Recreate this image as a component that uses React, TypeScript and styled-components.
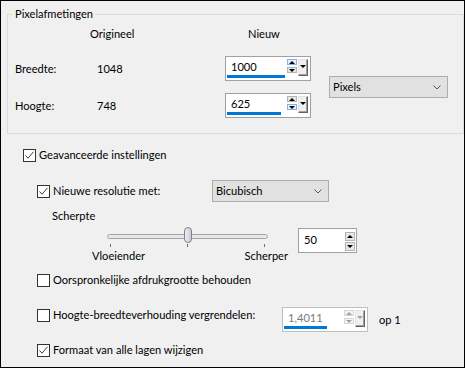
import React from 'react';
import styled, { createGlobalStyle } from 'styled-components';

const GlobalStyle = createGlobalStyle`
  html, body {
    margin: 0;
    padding: 0;
    background: #fff;
  }
`;

const Window = styled.div`
  box-sizing: border-box;
  width: 465px;
  height: 368px;
  border: 1px solid #000;
  background: #f0f0f0;
  padding: 5px 0 0 6px;
  font-family: Lato, 'Noto Sans', 'Liberation Sans', sans-serif;
  font-size: 11.1px;
  line-height: 16px;
  color: #000;
  display: flex;
  flex-direction: column;
`;

const Group = styled.fieldset`
  box-sizing: border-box;
  margin: 0;
  padding: 0;
  min-width: 0;
  width: 457px;
  height: 128px;
  border: 1px solid #dcdcdc;
`;

const Legend = styled.legend`
  margin-left: 5px;
  padding: 0 2px;
  line-height: 16px;
`;

const SizeGrid = styled.div`
  display: grid;
  grid-template-columns: 75px 135px 104px 119px;
  grid-template-rows: 18px 25px 25px;
  row-gap: 12px;
  padding: 4px 0 0 7px;
  align-items: center;
`;

const Cell = styled.div<{ $indent?: number; $head?: boolean }>`
  padding-left: ${(p) => p.$indent ?? 0}px;
  align-self: ${(p) => (p.$head ? 'start' : 'center')};
  white-space: nowrap;
`;

const ComboCell = styled.div`
  grid-column: 4;
  grid-row: 2 / span 2;
  align-self: center;
`;

const Combo = styled.div<{ $w: number }>`
  box-sizing: border-box;
  width: ${(p) => p.$w}px;
  height: 22px;
  border: 1px solid #adadad;
  background: #e1e1e1;
  display: flex;
  align-items: center;
  justify-content: space-between;
  padding: 0 6px 0 3px;
`;

const SpinBox = styled.div<{ $w: number; $pt: number; $pr: number; $disabled?: boolean }>`
  box-sizing: border-box;
  width: ${(p) => p.$w}px;
  height: 25px;
  border: 1px solid ${(p) => (p.$disabled ? '#bfbfbf' : '#a0a0a0')};
  background: #fff;
  display: flex;
  align-items: flex-start;
  padding: ${(p) => p.$pt}px ${(p) => p.$pr}px 0 1px;
  flex: none;
`;

const Field = styled.div<{ $disabled?: boolean }>`
  flex: 1;
  min-width: 0;
  display: flex;
  flex-direction: column;
  color: ${(p) => (p.$disabled ? '#7a7a7a' : '#000')};
`;

const FieldText = styled.span`
  padding-left: 4px;
  line-height: 16px;
`;

const Bar = styled.span<{ $w: number }>`
  display: block;
  width: ${(p) => p.$w}px;
  height: 3px;
  background: #0078d7;
`;

const SpinCol = styled.div<{ $gap: number }>`
  width: 10px;
  display: flex;
  flex-direction: column;
  gap: ${(p) => p.$gap}px;
`;

const SpinBtn = styled.span<{
  $h: number;
  $dir: 'up' | 'down';
  $active?: boolean;
  $disabled?: boolean;
}>`
  box-sizing: border-box;
  height: ${(p) => p.$h}px;
  border: 1px solid
    ${(p) => (p.$active ? '#7eb4ea' : p.$disabled ? '#d6d6d6' : '#b4b4b4')};
  background: ${(p) => (p.$active ? '#e5f1fb' : p.$disabled ? '#f4f4f4' : '#e6e6e6')};
  display: flex;
  align-items: center;
  justify-content: center;

  &::after {
    content: '';
    width: 0;
    height: 0;
    border-left: 3px solid transparent;
    border-right: 3px solid transparent;
    ${(p) => (p.$dir === 'up' ? 'border-bottom' : 'border-top')}: 3px solid
      ${(p) => (p.$disabled ? '#a0a0a0' : '#000')};
  }
`;

const DropBtn = styled.span<{ $disabled?: boolean }>`
  box-sizing: border-box;
  width: 10px;
  height: 17px;
  margin-left: 1px;
  background: #f0f0f0;
  border-top: 1px solid #e3e3e3;
  border-left: 1px solid #e3e3e3;
  border-right: 1px solid #646464;
  border-bottom: 1px solid #646464;
  box-shadow: inset -1px -1px #a0a0a0;
  display: flex;
  justify-content: center;
  padding-top: 5px;

  &::after {
    content: '';
    width: 0;
    height: 0;
    border-left: 3px solid transparent;
    border-right: 3px solid transparent;
    border-top: 3px solid ${(p) => (p.$disabled ? '#a0a0a0' : '#000')};
  }
`;

const OptionRow = styled.div<{ $mt: number; $indent: number }>`
  margin-top: ${(p) => p.$mt}px;
  padding-left: ${(p) => p.$indent}px;
  display: flex;
  align-items: center;
  line-height: 16px;
  white-space: nowrap;
`;

const GridRow = styled.div<{ $mt: number; $cols: string; $align: string }>`
  margin-top: ${(p) => p.$mt}px;
  padding-left: 30px;
  display: grid;
  grid-template-columns: ${(p) => p.$cols};
  justify-content: start;
  align-items: ${(p) => p.$align};
  line-height: 16px;
  white-space: nowrap;
`;

const CheckLabel = styled.label`
  display: flex;
  align-items: center;
  gap: 3px;
  height: 16px;
`;

const Box = styled.span`
  box-sizing: border-box;
  width: 13px;
  height: 13px;
  border: 1px solid #333;
  background: #fff;
  display: inline-flex;
  align-items: center;
  justify-content: center;
  flex: none;
`;

const SideText = styled.span`
  margin-left: 11px;
  align-self: center;
`;

const SliderRow = styled.div`
  margin-top: 3px;
  padding-left: 85px;
  display: flex;
  align-items: flex-start;
`;

const SliderBlock = styled.div`
  width: 196px;
  display: flex;
  flex-direction: column;
`;

const TrackArea = styled.div`
  position: relative;
  height: 16px;
`;

const Track = styled.div`
  box-sizing: border-box;
  margin: 7px 0 0 15px;
  width: 161px;
  height: 5px;
  border: 1px solid #a7a7a7;
  border-radius: 3px;
  background: #e7e7e7;
`;

const Thumb = styled.div`
  position: absolute;
  top: 0;
  box-sizing: border-box;
  width: 8px;
  height: 16px;
  border: 1px solid #7e7f8c;
  border-radius: 4px;
  background: linear-gradient(to right, #eceef5, #c9cbd8);
`;

const Ticks = styled.div`
  margin: 1px 0 0 18px;
  width: 155px;
  height: 3px;
  display: flex;
  justify-content: space-between;
`;

const Tick = styled.span`
  width: 1px;
  background: #707070;
`;

const SliderLabels = styled.div`
  margin-top: 1px;
  display: flex;
  justify-content: space-between;
  line-height: 16px;
`;

const SpinSlot = styled.div`
  margin: 1px 0 0 10px;
`;

const Chevron = () => (
  <svg width="8" height="5" viewBox="0 0 8 5">
    <polyline points="0.5,0.5 4,4 7.5,0.5" fill="none" stroke="#555" strokeWidth="1" />
  </svg>
);

const Check = ({ checked, label }: { checked: boolean; label: string }) => (
  <CheckLabel>
    <Box>
      {checked && (
        <svg width="11" height="11" viewBox="0 0 11 11">
          <polyline
            points="1.5,5.5 4,8.2 9.5,1.8"
            fill="none"
            stroke="#3c3c3c"
            strokeWidth="1"
          />
        </svg>
      )}
    </Box>
    <span>{label}</span>
  </CheckLabel>
);

type SpinnerProps = {
  value: string;
  bar?: number;
  drop?: boolean;
  big?: boolean;
  disabled?: boolean;
  activeUp?: boolean;
  activeDown?: boolean;
};

const Spinner = ({ value, bar, drop, big, disabled, activeUp, activeDown }: SpinnerProps) => (
  <SpinBox $w={big ? 59 : 86} $pt={big ? 3 : 2} $pr={big ? 1 : 2} $disabled={disabled}>
    <Field $disabled={disabled}>
      <FieldText>{value}</FieldText>
      {bar !== undefined && <Bar $w={bar} />}
    </Field>
    <SpinCol $gap={big ? 1 : 2}>
      <SpinBtn $h={big ? 9 : 6} $dir="up" $active={activeUp} $disabled={disabled} />
      <SpinBtn $h={big ? 9 : 6} $dir="down" $active={activeDown} $disabled={disabled} />
    </SpinCol>
    {drop && <DropBtn $disabled={disabled} />}
  </SpinBox>
);

const SHARPNESS = 50;
const TICK_START = 18;
const TICK_END = 172;

export default function App() {
  const thumbLeft = TICK_START + ((TICK_END - TICK_START) * SHARPNESS) / 100 - 3.5;

  return (
    <>
      <GlobalStyle />
      <Window>
        <Group>
          <Legend>Pixelafmetingen</Legend>
          <SizeGrid>
            <Cell $head />
            <Cell $head>Origineel</Cell>
            <Cell $head $indent={23}>
              Nieuw
            </Cell>
            <Cell $head />

            <Cell>Breedte:</Cell>
            <Cell $indent={7}>1048</Cell>
            <Cell>
              <Spinner value="1000" bar={58} drop activeUp />
            </Cell>

            <Cell>Hoogte:</Cell>
            <Cell $indent={7}>748</Cell>
            <Cell>
              <Spinner value="625" bar={54} drop activeDown />
            </Cell>

            <ComboCell>
              <Combo $w={119}>
                <span>Pixels</span>
                <Chevron />
              </Combo>
            </ComboCell>
          </SizeGrid>
        </Group>

        <OptionRow $mt={13} $indent={16}>
          <Check checked label="Geavanceerde instellingen" />
        </OptionRow>

        <GridRow $mt={17} $cols="175px auto" $align="center">
          <Check checked label="Nieuwe resolutie met:" />
          <Combo $w={117}>
            <span>Bicubisch</span>
            <Chevron />
          </Combo>
        </GridRow>

        <OptionRow $mt={6} $indent={45}>
          Scherpte
        </OptionRow>

        <SliderRow>
          <SliderBlock>
            <TrackArea>
              <Track />
              <Thumb style={{ left: thumbLeft }} />
            </TrackArea>
            <Ticks>
              <Tick />
              <Tick />
              <Tick />
            </Ticks>
            <SliderLabels>
              <span>Vloeiender</span>
              <span>Scherper</span>
            </SliderLabels>
          </SliderBlock>
          <SpinSlot>
            <Spinner value="50" big />
          </SpinSlot>
        </SliderRow>

        <OptionRow $mt={8} $indent={30}>
          <Check checked={false} label="Oorspronkelijke afdrukgrootte behouden" />
        </OptionRow>

        <GridRow $mt={19} $cols="245px 86px auto" $align="start">
          <Check checked={false} label="Hoogte-breedteverhouding vergrendelen:" />
          <Spinner value="1,4011" bar={43} drop disabled />
          <SideText>op 1</SideText>
        </GridRow>

        <OptionRow $mt={10} $indent={30}>
          <Check checked label="Formaat van alle lagen wijzigen" />
        </OptionRow>
      </Window>
    </>
  );
}
